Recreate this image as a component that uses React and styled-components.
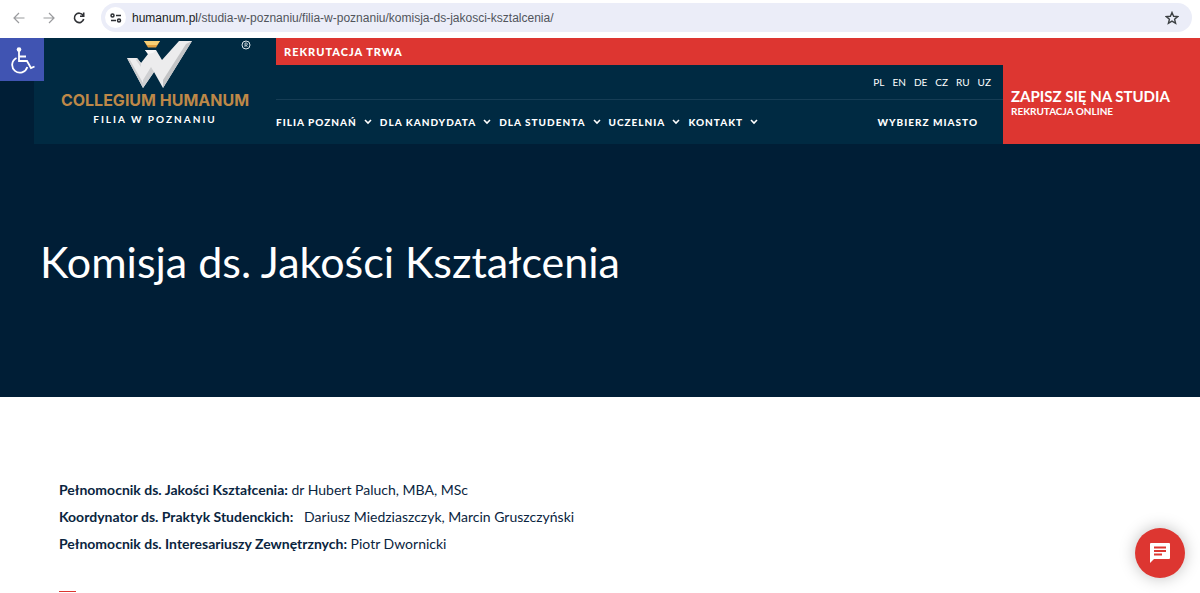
import React from 'react';
import styled, { createGlobalStyle } from 'styled-components';

const languages = ['PL', 'EN', 'DE', 'CZ', 'RU', 'UZ'];
const menu = ['FILIA POZNAŃ', 'DLA KANDYDATA', 'DLA STUDENTA', 'UCZELNIA', 'KONTAKT'];

const people = [
    { role: 'Pełnomocnik ds. Jakości Kształcenia:', names: ' dr Hubert Paluch, MBA, MSc' },
    { role: 'Koordynator ds. Praktyk Studenckich:', names: ' \u00a0 Dariusz Miedziaszczyk, Marcin Gruszczyński' },
    { role: 'Pełnomocnik ds. Interesariuszy Zewnętrznych:', names: ' Piotr Dwornicki' },
];

const Logo = () => (
    <LogoLink href="#home">
        <LogoMark width="68" height="50" viewBox="0 0 68 50" aria-hidden="true">
            <path d="M19 3h16l-4 6.500h-8z" fill="#e3a03f" />
            <path d="M19 3h16l-3 4h-10z" fill="#f7cf75" />
            <path d="M2 20h10l4 5 7-9-3-4h11l6 10L54 3h13L38 50l-9-16-11 16z" fill="#ececed" />
            <path d="M2 20l16 30v-5L5 22z" fill="#cbccce" />
            <path d="M18 42v8l11-16-3-5z" fill="#cfd0d2" />
            <path d="M38 42v8L67 3l-6 3z" fill="#c3c4c6" />
            <path d="M12 20l4 5v4l-5-7z" fill="#d6d6d8" />
            <path d="M20 12h11l-3 3-5 1z" fill="#f8f8f9" />
        </LogoMark>
        <LogoName>COLLEGIUM HUMANUM</LogoName>
        <LogoBranch>FILIA W POZNANIU</LogoBranch>
        <Registered width="10" height="10" viewBox="0 0 10 10" aria-hidden="true">
            <circle cx="5" cy="5" r="4" fill="none" stroke="#dfe7ec" />
            <path d="M4 7V3h1.300a1.100 1.100 0 0 1 0 2.200H4M5.200 5.200L6.400 7" fill="none" stroke="#dfe7ec" strokeWidth="0.800" />
        </Registered>
    </LogoLink>
)

const BrowserBar = () => (
    <Browser>
        <ToolButton aria-label="Wstecz" $muted>
            <svg width="12" height="12" viewBox="0 0 12 12"><path d="M11.500 6H1M6 1L1 6l5 5" /></svg>
        </ToolButton>
        <ToolButton aria-label="Dalej" $muted>
            <svg width="12" height="12" viewBox="0 0 12 12"><path d="M0.500 6H11M6 1l5 5-5 5" /></svg>
        </ToolButton>
        <ToolButton aria-label="Odśwież">
            <svg width="12" height="12" viewBox="0 0 12 12"><path d="M10 3.200A4.700 4.700 0 1 0 10.700 7M10.700 0.500v3.700H7" /></svg>
        </ToolButton>
        <Address>
            <SiteInfo aria-label="Informacje o stronie">
                <svg width="12" height="10" viewBox="0 0 12 10" fill="none" stroke="#2c2f33" strokeWidth="1.500">
                    <circle cx="2.500" cy="2.500" r="1.500" />
                    <path d="M6 2.500h5M1 7.500h5" />
                    <circle cx="9" cy="7.500" r="1.500" />
                </svg>
            </SiteInfo>
            <Url>
                <Host>humanum.pl</Host>/studia-w-poznaniu/filia-w-poznaniu/komisja-ds-jakosci-ksztalcenia/
            </Url>
            <StarButton aria-label="Dodaj zakładkę">
                <svg width="14" height="14" viewBox="0 0 14 14" fill="none" stroke="#3c4043" strokeWidth="1.400">
                    <path d="M7 1.500l1.600 3.800 4.100.3-3.100 2.700 1 4L7 10.100l-3.600 2.200 1-4L1.300 5.600l4.100-.3z" />
                </svg>
            </StarButton>
        </Address>
    </Browser>
)

const App = () => {

    return (

        <Page>
            <GlobalStyle />
            <BrowserBar />

            <Site>
                <Accessibility aria-label="Dostępność">
                    <svg width="26" height="28" viewBox="0 0 26 28" fill="none" stroke="#fff" strokeWidth="1.800">
                        <circle cx="10" cy="3.500" r="2.300" fill="#fff" stroke="none" />
                        <path d="M10 5v10h8l4 7 3.500-1.500M10 10.500h7" />
                        <path d="M7.500 12a7.700 7.700 0 1 0 10.800 9" />
                    </svg>
                </Accessibility>

                <Header>
                    <Logo />
                    <HeaderBody>
                        <Promo>REKRUTACJA TRWA</Promo>
                        <HeaderRow>
                            <Navigation>
                                <Languages>
                                    {languages.map(code => <a key={code} href={'#' + code}>{code}</a>)}
                                </Languages>
                                <Menu>
                                    {menu.map(item => (
                                        <MenuButton key={item}>
                                            {item}
                                            <svg width="8" height="6" viewBox="0 0 8 6" aria-hidden="true"><path d="M1 1l3 3 3-3" fill="none" stroke="#fff" strokeWidth="1.600" /></svg>
                                        </MenuButton>
                                    ))}
                                    <CityLink href="#miasto">WYBIERZ MIASTO</CityLink>
                                </Menu>
                            </Navigation>
                            <Enroll href="#rekrutacja">
                                <EnrollTitle>ZAPISZ SIĘ NA STUDIA</EnrollTitle>
                                <EnrollNote>REKRUTACJA ONLINE</EnrollNote>
                            </Enroll>
                        </HeaderRow>
                    </HeaderBody>
                </Header>

                <Title>Komisja ds. Jakości Kształcenia</Title>
            </Site>

            <Content>
                {people.map(({ role, names }) => (
                    <Person key={role}><strong>{role}</strong>{names}</Person>
                ))}
                <Divider />
            </Content>

            <Chat aria-label="Czat">
                <svg width="20" height="20" viewBox="0 0 20 20" aria-hidden="true">
                    <path d="M1 0h18a1 1 0 0 1 1 1v14a1 1 0 0 1-1 1H4l-4 4V1a1 1 0 0 1 1-1z" fill="#fff" />
                    <path d="M4 4.500h12M4 8h12M4 11.500h8" stroke="#dd3631" strokeWidth="2" />
                </svg>
            </Chat>
        </Page>

    )
}

export default App;

const GlobalStyle = createGlobalStyle`
    * {
        box-sizing: border-box;
    }
    body {
        margin: 0;
        background: #fff;
    }
    button {
        border: 0;
        padding: 0;
        background: none;
        font: inherit;
        color: inherit;
        cursor: pointer;
    }
    a {
        color: inherit;
        text-decoration: none;
    }
    svg {
        display: block;
        flex: none;
    }
`

const Page = styled.div`
    font-family: Lato, "Noto Sans", sans-serif;
    color: #0a2540;
    min-height: 100vh;
    overflow: hidden;
`

const Browser = styled.div`
    display: flex;
    align-items: center;
    height: 38px;
    padding: 0 8px 3px;
    background: #fff;
`

const ToolButton = styled.button`
    display: grid;
    place-items: center;
    width: 22px;
    height: 22px;
    margin-right: 8px;

    svg {
        fill: none;
        stroke: ${props => props.$muted ? '#9a9b9e' : '#303236'};
        stroke-width: ${props => props.$muted ? '1.200' : '1.600'};
    }
`

const Address = styled.div`
    display: flex;
    align-items: center;
    flex: 1;
    height: 29px;
    margin-left: 3px;
    padding: 0 13px 0 4px;
    border-radius: 15px;
    background: #ebedf8;
`

const SiteInfo = styled.button`
    display: grid;
    place-items: center;
    width: 21px;
    height: 21px;
    margin-right: 6px;
    border-radius: 50%;
    background: #fff;
`

const Url = styled.span`
    flex: 1;
    font: 12px/16px "Liberation Sans", sans-serif;
    color: #51555b;
`

const Host = styled.span`
    color: #202124;
`

const StarButton = styled.button`
    display: grid;
    place-items: center;
`

const Site = styled.div`
    position: relative;
    background: #001e36;
`

const Accessibility = styled.button`
    position: absolute;
    top: 0;
    left: 0;
    display: grid;
    place-items: center;
    width: 44px;
    height: 43px;
    background: #4054b2;
`

const Header = styled.header`
    display: flex;
    margin-left: 34px;
    background: #002a42;
    color: #fff;
`

const LogoLink = styled.a`
    position: relative;
    display: flex;
    flex-direction: column;
    align-items: center;
    width: 242px;
`

const LogoMark = styled.svg`
    margin-left: 8px;
`

const LogoName = styled.span`
    margin-top: 3px;
    font: 700 16px/18px Inter, sans-serif;
    color: #bd8848;
`

const LogoBranch = styled.span`
    margin-top: 3px;
    font-size: 10px;
    line-height: 14px;
    font-weight: 700;
    letter-spacing: 2px;
`

const Registered = styled.svg`
    position: absolute;
    top: 2px;
    right: 25px;
`

const HeaderBody = styled.div`
    flex: 1;
`

const Promo = styled.div`
    padding: 0 8px;
    font-size: 11px;
    line-height: 27px;
    font-weight: 900;
    letter-spacing: 1px;
    background: #dd3631;
`

const HeaderRow = styled.div`
    display: flex;
`

const Navigation = styled.div`
    flex: 1;
`

const Languages = styled.nav`
    display: flex;
    justify-content: flex-end;
    gap: 8px;
    padding-right: 12px;
    font-size: 10px;
    line-height: 34px;
    border-bottom: 1px solid #163d55;
`

const Menu = styled.nav`
    display: flex;
    align-items: center;
    gap: 8px;
    height: 44px;
    padding-bottom: 1px;
    font-size: 10px;
    font-weight: 900;
    letter-spacing: 1px;
`

const MenuButton = styled.button`
    display: flex;
    align-items: center;
    gap: 7px;
    letter-spacing: inherit;
`

const CityLink = styled.a`
    margin-left: auto;
    padding-right: 25px;
`

const Enroll = styled.a`
    display: flex;
    flex-direction: column;
    width: 197px;
    padding: 22px 8px 0;
    background: #dd3631;
`

const EnrollTitle = styled.span`
    font-size: 15px;
    line-height: 18px;
    font-weight: 700;
`

const EnrollNote = styled.span`
    font-size: 10px;
    line-height: 12px;
    font-weight: 700;
`

const Title = styled.h1`
    margin: 0;
    padding: 93px 40px 110px;
    font-size: 43px;
    line-height: 50px;
    font-weight: 400;
    color: #fff;
`

const Content = styled.main`
    padding: 79px 59px 0;
`

const Person = styled.p`
    margin: 0;
    font-size: 14px;
    line-height: 27px;
`

const Divider = styled.hr`
    width: 17px;
    height: 1px;
    margin: 34px 0 0;
    border: 0;
    background: #dd3631;
`

const Chat = styled.button`
    position: fixed;
    right: 15px;
    bottom: 15px;
    display: grid;
    place-items: center;
    width: 50px;
    height: 50px;
    border-radius: 50%;
    background: #dd3631;
    box-shadow: 0 0 16px rgba(0, 0, 0, 0.250);
`
